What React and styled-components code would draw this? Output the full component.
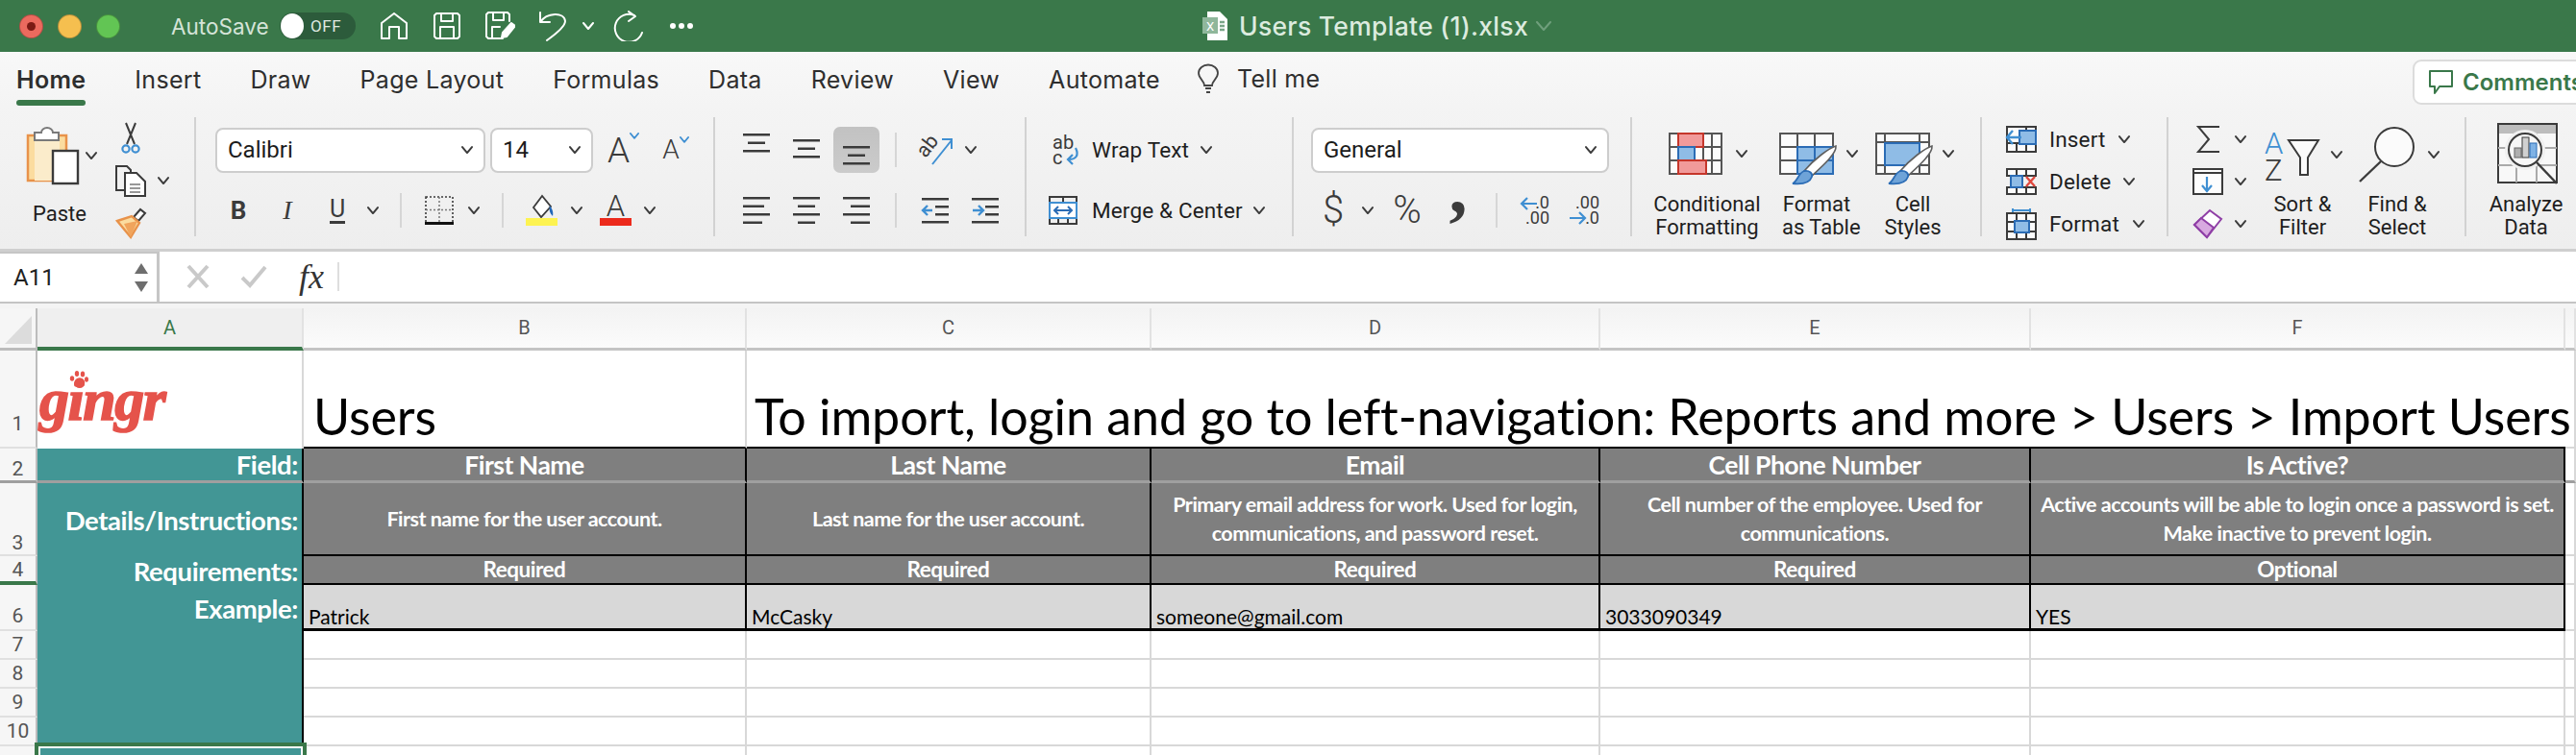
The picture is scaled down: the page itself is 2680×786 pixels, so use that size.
import React from 'react'
import styled, { createGlobalStyle, css } from 'styled-components'

const INK = '#3b3b3b'
const BLUE = '#3f8fd2'
const DEEP = '#2b6cb5'
const GREEN = '#3a784a'
const UI = `Roboto, "Liberation Sans", sans-serif`
const WIDE = `Inter, Roboto, sans-serif`
const CELL = `Lato, "Liberation Sans", sans-serif`

const Global = createGlobalStyle`
    html, body { margin: 0; padding: 0; background: #fff; }
    #root { width: 2680px; height: 786px; overflow: hidden; }
    * { box-sizing: border-box; }
`

const Page = styled.div`
    width: 2680px;
    height: 786px;
    overflow: hidden;
    display: flex;
    flex-direction: column;
    font-family: ${UI};
    color: #222;
`

/* ---------- title bar ---------- */

const TitleBar = styled.header`
    height: 54px;
    flex: none;
    background: ${GREEN};
    display: flex;
    align-items: center;
    padding-left: 20px;
`

const Light = styled.span`
    width: 25px;
    height: 25px;
    margin-right: 15px;
    border-radius: 50%;
    background: ${p => p.$color};
    border: 1px solid rgba(0, 0, 0, 0.25);
    display: flex;
    align-items: center;
    justify-content: center;
    &::after {
        content: '';
        display: ${p => (p.$dot ? 'block' : 'none')};
        width: 9px;
        height: 9px;
        border-radius: 50%;
        background: #7c1a14;
    }
`

const AutoSave = styled.span`
    margin-left: 38px;
    width: 113px;
    font-family: ${WIDE};
    font-size: 22.5px;
    color: #d5e4d8;
`

const Toggle = styled.span`
    width: 79px;
    height: 28px;
    border-radius: 14px;
    background: #2c5b3b;
    display: flex;
    align-items: center;
    padding-left: 1px;
    color: #dfe9e1;
    font-size: 17px;
    letter-spacing: 0.6px;
    &::before {
        content: '';
        width: 24px;
        height: 26px;
        border-radius: 50%;
        background: #fff;
        margin-right: 7px;
    }
`

const QuickIcon = styled.svg`
    flex: none;
    margin-left: ${p => p.$ml}px;
    fill: none;
    stroke: #fff;
    stroke-width: 2;
    stroke-linejoin: round;
    stroke-linecap: round;
`

const DocSlot = styled.span`
    margin-left: 530px;
    display: flex;
`

const DocTitle = styled.span`
    margin-left: 12px;
    font-family: ${WIDE};
    font-size: 26.5px;
    letter-spacing: 0.3px;
    font-weight: 500;
    color: #dcebdf;
    white-space: nowrap;
`

/* ---------- tabs ---------- */

const TabRow = styled.nav`
    height: 56px;
    flex: none;
    background: linear-gradient(#f8f8f8, #f4f4f4);
    display: flex;
    padding-left: 17px;
    gap: 51px;
`

const Tab = styled.span`
    height: 56px;
    display: flex;
    flex-direction: column;
    font-family: ${WIDE};
    font-size: 25px;
    letter-spacing: 0.3px;
    color: #2e2e2e;
    line-height: 58px;
    white-space: nowrap;
    ${p => p.$active && css`
        font-weight: 600;
        &::after {
            content: '';
            display: block;
            height: 6px;
            margin-top: -8px;
            border-radius: 3px;
            background: ${GREEN};
        }
    `}
`

const TellMe = styled.span`
    margin-left: -12px;
    display: flex;
    align-items: center;
    gap: 19px;
    font-family: ${WIDE};
    font-size: 25px;
    letter-spacing: 0.3px;
    color: #2e2e2e;
`

const CommentsButton = styled.button`
    margin: 8px -40px 0 auto;
    width: 210px;
    height: 47px;
    flex: none;
    background: #fff;
    border: 2px solid #dcdcdc;
    border-radius: 9px;
    display: flex;
    align-items: center;
    gap: 10px;
    padding: 0 0 0 15px;
    color: ${GREEN};
    font-family: ${WIDE};
    font-size: 24px;
    font-weight: 600;
`

/* ---------- ribbon ---------- */

const Ribbon = styled.section`
    height: 152px;
    flex: none;
    display: flex;
    padding-top: 12px;
    background: linear-gradient(#f4f4f4, #eeeeee);
    border-bottom: 3px solid #cfcfcf;
`

const Group = styled.div`
    width: ${p => p.$w}px;
    height: 124px;
    flex: none;
    display: flex;
    border-right: ${p => (p.$last ? 'none' : '2px solid #d2d2d2')};
`

const Stack = styled.div`
    display: flex;
    flex-direction: column;
    width: ${p => (p.$w ? `${p.$w}px` : 'auto')};
    flex: none;
    padding-left: ${p => p.$pl || 0}px;
    padding-top: ${p => p.$pt || 0}px;
`

const Row = styled.div`
    display: flex;
    align-items: ${p => p.$align || 'center'};
    height: ${p => p.$h || 44}px;
    margin-top: ${p => p.$mt || 0}px;
    margin-left: ${p => p.$ml || 0}px;
    flex: none;
`

const Slot = styled.span`
    width: ${p => p.$w}px;
    margin-left: ${p => p.$ml || 0}px;
    height: ${p => (p.$h ? `${p.$h}px` : 'auto')};
    flex: none;
    display: flex;
    align-items: center;
    justify-content: center;
`

const ActiveSlot = styled(Slot)`
    height: 48px;
    background: linear-gradient(#c2c2c2, #cbcbcb);
    border-radius: 7px;
    align-items: flex-end;
    padding-bottom: 8px;
`

const AlignTop = styled.span`
    display: flex;
    margin-top: ${p => p.$mt}px;
`

const Sep = styled.span`
    width: 2px;
    height: 36px;
    background: #d6d6d6;
`

const Select = styled.div`
    width: ${p => p.$w}px;
    height: 47px;
    margin-left: ${p => p.$ml || 0}px;
    flex: none;
    background: #fff;
    border: 2px solid #cdcdcd;
    border-radius: 8px;
    display: flex;
    align-items: center;
    justify-content: space-between;
    padding: 0 11px 0 11px;
    font-size: 24px;
    color: #1c1c1c;
`

const CapA = styled.span`
    font-size: ${p => p.$size}px;
    font-weight: 300;
    color: ${INK};
    line-height: 1;
    margin-left: ${p => p.$ml}px;
    display: flex;
    align-items: flex-start;
`

const Letter = styled.span`
    font-family: ${p => (p.$serif ? '"Liberation Serif", serif' : UI)};
    font-size: ${p => p.$size || 27}px;
    font-weight: ${p => p.$weight || 400};
    font-style: ${p => (p.$italic ? 'italic' : 'normal')};
    color: ${INK};
    line-height: 1;
    border-bottom: ${p => (p.$under ? `3px solid ${INK}` : 'none')};
`

const CommaMark = styled.span`
    font-family: "Liberation Serif", serif;
    font-weight: 700;
    font-size: 76px;
    line-height: 34px;
    height: 34px;
    color: ${INK};
    transform: translateY(-24px);
`

const Label = styled.span`
    font-size: 22.5px;
    line-height: 24px;
    letter-spacing: 0.15px;
    color: #1e1e1e;
    white-space: nowrap;
    margin-left: ${p => p.$ml || 0}px;
`

const BigLabel = styled.span`
    width: ${p => p.$w}px;
    flex: none;
    text-align: center;
    font-size: 22px;
    line-height: 24px;
    color: #1e1e1e;
    white-space: nowrap;
`

const Ico = styled.svg`
    flex: none;
    display: block;
    overflow: visible;
    margin-left: ${p => p.$ml || 0}px;
`

const IconText = styled.text`
    font-family: ${UI};
    fill: ${p => p.$fill || INK};
`

const Chev = ({ ml = 0, color = INK, size = 12 }) => (
    <Ico $ml={ml} width={size} height={size * 0.67} viewBox="0 0 12 8">
        <path d="M1 1l5 6 5-6" fill="none" stroke={color} strokeWidth="2" strokeLinecap="round" strokeLinejoin="round" />
    </Ico>
)

const Lines = ({ rows, w = 28, step = 8.5 }) => (
    <Ico width={w} height={(rows.length - 1) * step + 3}>
        {rows.map((r, i) => (
            <rect key={i} x={r[0]} y={i * step} width={r[1]} height="2.5" fill={INK} />
        ))}
    </Ico>
)

const Indent = ({ flip }) => (
    <Ico width="28" height="26" viewBox="0 0 28 26">
        <rect x="0" y="0" width="28" height="2.5" fill={INK} />
        <rect x="14" y="8" width="14" height="2.5" fill={INK} />
        <rect x="14" y="16" width="14" height="2.5" fill={INK} />
        <rect x="0" y="24" width="28" height="2.5" fill={INK} />
        <path d={flip ? 'M1 13h10M7 8l5 5-5 5' : 'M11 13H1M6 8l-5 5 5 5'} fill="none" stroke={BLUE} strokeWidth="2.4" />
    </Ico>
)

const Paste = () => (
    <Ico width="54" height="60" viewBox="0 0 54 60">
        <rect x="1" y="9" width="40" height="47" fill="#fbdc9f" stroke="#e8924a" strokeWidth="2.5" />
        <rect x="8" y="11" width="26" height="45" fill="#fbeccb" />
        <path d="M8 14V6h7a6 5 0 0 1 12 0h6v8z" fill="#fff" stroke="#7a7a7a" strokeWidth="2" />
        <rect x="27" y="25" width="26" height="34" fill="#fff" stroke={INK} strokeWidth="2.4" />
    </Ico>
)

const Scissors = () => (
    <Ico width="20" height="32" viewBox="0 0 20 32">
        <path d="M5 0l9 22M15 0L6 22" fill="none" stroke={INK} strokeWidth="2" />
        <circle cx="5" cy="27" r="3.6" fill="none" stroke={BLUE} strokeWidth="2.2" />
        <circle cx="15" cy="27" r="3.6" fill="none" stroke={BLUE} strokeWidth="2.2" />
    </Ico>
)

const Copy = () => (
    <Ico width="32" height="32" viewBox="0 0 32 32">
        <path d="M10 26H1V1h11l4 4v3" fill="none" stroke={INK} strokeWidth="2" />
        <path d="M10 8h12l9 9v15H10z" fill="#fff" stroke={INK} strokeWidth="2" />
        <path d="M15 20h11M15 24h11M15 28h11" stroke="#777" strokeWidth="1.6" />
    </Ico>
)

const Painter = () => (
    <Ico width="32" height="30" viewBox="0 0 32 30">
        <path d="M19 9l7-8 5 4-7 8z" fill="#fff" stroke={INK} strokeWidth="2" />
        <path d="M2 13l15-5 8 7-9 15z" fill="#fbdc9f" stroke="#e8924a" strokeWidth="2.4" />
        <path d="M16 30L9 16l14-3z" fill="#f0a45c" />
    </Ico>
)

const Borders = () => (
    <Ico width="30" height="30" viewBox="0 0 30 30">
        <rect x="1" y="1" width="28" height="27" fill="none" stroke={INK} strokeWidth="1.6" strokeDasharray="2 2" />
        <path d="M15 1v27M1 14.500h28" stroke="#777" strokeWidth="1.5" strokeDasharray="2 2" />
        <rect x="0" y="27" width="30" height="3" fill="#111" />
    </Ico>
)

const FillColor = () => (
    <Ico width="33" height="32" viewBox="0 0 33 32">
        <path d="M17 1l-9 12 8 10 10-11z" fill="#fff" stroke={INK} strokeWidth="1.8" />
        <path d="M25 11c2 3 4 6 3 11-3-3-4-6-3-11z" fill="#1f66b8" />
        <rect x="0" y="24" width="33" height="8" fill="#fdf351" />
    </Ico>
)

const FontColor = () => (
    <Ico width="33" height="32" viewBox="0 0 33 32">
        <IconText x="16.500" y="22" fontSize="31" fontWeight="300" textAnchor="middle">A</IconText>
        <rect x="0" y="24" width="33" height="8" fill="#ec2a1c" />
    </Ico>
)

const Orientation = () => (
    <Ico width="34" height="30" viewBox="0 0 34 30">
        <IconText transform="translate(10 18) rotate(-52)" fontSize="21" x="-8" y="0">ab</IconText>
        <path d="M12 30L32 5M22 4h10v10" fill="none" stroke={BLUE} strokeWidth="2" />
    </Ico>
)

const WrapIcon = () => (
    <Ico width="28" height="30" viewBox="0 0 28 30">
        <IconText x="0" y="14" fontSize="20">ab</IconText>
        <IconText x="0" y="30" fontSize="20">c</IconText>
        <path d="M24 13c4 8 0 12-7 12M21 20l-5 5 5 5" fill="none" stroke={BLUE} strokeWidth="2.2" />
    </Ico>
)

const MergeIcon = () => (
    <Ico width="30" height="30" viewBox="0 0 30 30">
        <path d="M1 1h28v28H1zM1 7h28M1 23h28M15 1v6M10 23v6M20 23v6" fill="none" stroke={INK} strokeWidth="2" />
        <rect x="1" y="7" width="28" height="16" fill="#fff" stroke={BLUE} strokeWidth="2" />
        <path d="M6 15h18M10 11l-4 4 4 4M20 11l4 4-4 4" fill="none" stroke={DEEP} strokeWidth="2" />
    </Ico>
)

const DecimalIcon = ({ more }) => (
    <Ico width="32" height="32" viewBox="0 0 32 32">
        {more ? (
            <>
                <IconText x="31" y="14" fontSize="18" textAnchor="end">.00</IconText>
                <IconText x="31" y="30" fontSize="18" textAnchor="end">.0</IconText>
                <path d="M0 24h16M10 18l6 6-6 6" fill="none" stroke={BLUE} strokeWidth="2.2" />
            </>
        ) : (
            <>
                <IconText x="31" y="14" fontSize="18" textAnchor="end">.0</IconText>
                <IconText x="31" y="30" fontSize="18" textAnchor="end">.00</IconText>
                <path d="M18 9H2M8 3L2 9l6 6" fill="none" stroke={BLUE} strokeWidth="2.2" />
            </>
        )}
    </Ico>
)

const Brush = () => (
    <g>
        <path d="M59 14c1 8-15 22-26 32l-7-6c10-12 26-24 33-26z" fill="#fff" stroke="#5f5f5f" strokeWidth="1.6" />
        <path d="M26 40c6-1 9 3 8 6-2 6-10 8-20 7 5-2 6-11 12-13z" fill="#6ea3d8" stroke={DEEP} strokeWidth="1.8" />
    </g>
)

const CondFormat = () => (
    <Ico width="56" height="44" viewBox="0 0 56 44">
        <path d="M1 1h54v42H1zM10 1v42M36 1v42M45 1v42M1 15h54M1 29h54" fill="#fbfbfb" stroke="#555" strokeWidth="2" />
        <rect x="10" y="1" width="26" height="14" fill="#f19a9a" stroke="#c5362b" strokeWidth="2" />
        <rect x="10" y="15" width="17" height="14" fill="#8fbce6" stroke={DEEP} strokeWidth="2" />
        <rect x="10" y="29" width="29" height="14" fill="#f19a9a" stroke="#c5362b" strokeWidth="2" />
    </Ico>
)

const TableStyle = () => (
    <Ico width="60" height="53" viewBox="0 0 60 53">
        <path d="M1 1h55v42H1zM19 1v42M37 1v42M1 15h55M1 29h55" fill="#fbfbfb" stroke="#555" strokeWidth="2" />
        <rect x="19" y="15" width="37" height="28" fill="#8fbce6" stroke={DEEP} strokeWidth="2" />
        <path d="M37 15v28M19 29h37" stroke={DEEP} strokeWidth="2" />
        <Brush />
    </Ico>
)

const CellStyle = () => (
    <Ico width="60" height="53" viewBox="0 0 60 53">
        <path d="M1 1h55v42H1zM10 1v42M46 1v42M1 10h55M1 34h55" fill="#fbfbfb" stroke="#555" strokeWidth="2" />
        <rect x="10" y="11" width="36" height="23" fill="#8fbce6" stroke={DEEP} strokeWidth="2" />
        <Brush />
    </Ico>
)

const InsertIcon = () => (
    <Ico width="32" height="28" viewBox="0 0 32 28">
        <path d="M1 1h30v26H1zM1 18h30M21 18v9M11 18v9M21 1v17" fill="#fbfbfb" stroke={INK} strokeWidth="2" />
        <rect x="14" y="5" width="17" height="14" fill="#8fbce6" stroke={DEEP} strokeWidth="2" />
        <path d="M16 12H1M7 5l-6 7 6 7" fill="none" stroke={BLUE} strokeWidth="2.4" />
    </Ico>
)

const DeleteIcon = () => (
    <Ico width="32" height="28" viewBox="0 0 32 28">
        <path d="M1 1h30v7H1zM1 20h30v7H1zM11 1v7M21 1v7M11 20v7M21 20v7" fill="#fbfbfb" stroke={INK} strokeWidth="2" />
        <rect x="5" y="8" width="12" height="12" fill="#8fbce6" stroke={DEEP} strokeWidth="2" />
        <path d="M21 9l9 10M30 9l-9 10" stroke="#e0483e" strokeWidth="2.4" />
    </Ico>
)

const FormatIcon = () => (
    <Ico width="32" height="33" viewBox="0 0 32 33">
        <path d="M1 5h30v27H1zM11 5v27M21 5v27M1 14h30M1 24h30" fill="#fbfbfb" stroke={INK} strokeWidth="2" />
        <rect x="9" y="13" width="15" height="12" fill="#8fbce6" stroke={DEEP} strokeWidth="2" />
        <path d="M7 2h18M7 0v4M25 0v4" stroke={BLUE} strokeWidth="2" />
    </Ico>
)

const Sigma = () => (
    <Ico width="24" height="28" viewBox="0 0 24 28">
        <path d="M24 1H2l11 13L2 27h22" fill="none" stroke={INK} strokeWidth="2" />
    </Ico>
)

const FillDown = () => (
    <Ico width="32" height="28" viewBox="0 0 32 28">
        <rect x="1" y="1" width="30" height="26" fill="#fdfdfd" stroke={INK} strokeWidth="2" />
        <path d="M1 5h30" stroke={INK} strokeWidth="2" />
        <path d="M15 9v14M10 18l5 6 5-6" fill="none" stroke={BLUE} strokeWidth="2.2" />
    </Ico>
)

const Eraser = () => (
    <Ico width="30" height="30" viewBox="0 0 30 30">
        <path d="M1 16L17 1l12 9-15 19z" fill="#fff" stroke="#8f3fa6" strokeWidth="2" />
        <path d="M1 16l7-7 13 10-7 10z" fill="#d8a9e0" stroke="#8f3fa6" strokeWidth="2" />
    </Ico>
)

const SortIcon = () => (
    <Ico width="56" height="54" viewBox="0 0 56 54">
        <IconText x="0" y="26" fontSize="31" fontWeight="300" $fill={BLUE}>A</IconText>
        <IconText x="0" y="54" fontSize="31" fontWeight="300">Z</IconText>
        <path d="M25 12h31L45 30v18h-8V30z" fill="#fbfbfb" stroke={INK} strokeWidth="2" />
    </Ico>
)

const FindIcon = () => (
    <Ico width="58" height="58" viewBox="0 0 58 58">
        <circle cx="37" cy="21" r="20" fill="#fbfbfb" stroke={INK} strokeWidth="2" />
        <path d="M23 36L1 57" stroke={INK} strokeWidth="2.4" />
    </Ico>
)

const Analyze = () => (
    <Ico width="64" height="64" viewBox="0 0 64 64">
        <rect x="1" y="1" width="61" height="61" fill="#f8f8f8" stroke={INK} strokeWidth="2" />
        <rect x="2" y="2" width="59" height="9" fill="#bdbdbd" />
        <path d="M1 26h61M1 44h61M20 11v51M41 11v51" stroke="#aaa" strokeWidth="2" />
        <circle cx="29" cy="28" r="19" fill="#fff" stroke="#f0f0f0" strokeWidth="4" />
        <circle cx="29" cy="28" r="17" fill="#f7f7f7" stroke={INK} strokeWidth="2" />
        <rect x="18" y="26" width="7" height="10" fill="#b0b0b0" stroke="#666" />
        <rect x="26" y="15" width="7" height="21" fill="#d0d0d0" stroke={INK} />
        <rect x="34" y="21" width="7" height="15" fill="#7fb2e5" stroke={DEEP} />
        <path d="M41 41l21 22" stroke={INK} strokeWidth="2.5" />
    </Ico>
)

const Bulb = () => (
    <Ico width="22" height="31" viewBox="0 0 22 31">
        <path d="M7 22c0-5-6-7-6-13a10 8.500 0 0 1 20 0c0 6-6 8-6 13z" fill="none" stroke="#444" strokeWidth="1.8" />
        <path d="M8 25h6M9 29h4" stroke="#444" strokeWidth="2" />
    </Ico>
)

const CommentIcon = () => (
    <Ico width="25" height="25" viewBox="0 0 25 25">
        <path d="M1 1h23v16H11l-5 7v-7H1z" fill="none" stroke={GREEN} strokeWidth="2" strokeLinejoin="round" />
    </Ico>
)

const DocIcon = () => (
    <Ico $ml={0} width="26" height="30" viewBox="0 0 26 30">
        <path d="M5 0h13l8 8v22H5z" fill="#fff" />
        <rect x="0" y="6" width="16" height="17" fill="#8fb79b" />
        <IconText x="8" y="20" fontSize="13" textAnchor="middle" $fill="#fff">X</IconText>
        <path d="M18 11h5M18 15h5M18 19h5" stroke="#7aa688" strokeWidth="2.5" />
    </Ico>
)

/* ---------- formula bar ---------- */

const FormulaBar = styled.div`
    height: 59px;
    flex: none;
    display: flex;
    border-bottom: 5px solid #f4f4f4;
    background: #fff;
    box-shadow: 0 2px 0 #bdbdbd, inset 0 -2px 0 #c4c4c4;
`

const NameBox = styled.div`
    width: 166px;
    height: 52px;
    flex: none;
    background: #fff;
    border-right: 3px solid #c6c6c6;
    border-top: 2px solid #c6c6c6;
    display: flex;
    align-items: center;
    justify-content: space-between;
    padding: 0 9px 0 14px;
    font-size: 24px;
    color: #222;
`

const Spinner = styled.span`
    display: flex;
    flex-direction: column;
    gap: 8px;
`

const Tri = styled.span`
    width: 14px;
    height: 11px;
    background: #6e6e6e;
    clip-path: ${p => (p.$down ? 'polygon(0 0, 100% 0, 50% 100%)' : 'polygon(50% 0, 100% 100%, 0 100%)')};
`

const FormulaTools = styled.div`
    flex: 1;
    display: flex;
    align-items: center;
    padding-left: 28px;
    height: 52px;
`

const FxMark = styled.span`
    font-family: "Liberation Serif", serif;
    font-style: italic;
    font-size: 36px;
    line-height: 1;
    margin-left: 33px;
    color: #333;
`

const FxRule = styled.span`
    width: 2px;
    height: 30px;
    margin-left: 14px;
    background: #dedede;
`

/* ---------- sheet ---------- */

const Sheet = styled.div`
    flex: 1;
    display: grid;
    grid-template-columns: 39px 277px 461px 421px 467px 448px 556px 11px;
    grid-template-rows: 44px 102px 36px 76px 30px 48px 30px 30px 30px 30px 36px;
    overflow: hidden;
    font-family: ${CELL};
    color: #000;
`

const Corner = styled.div`
    background: #f6f6f6;
    border-right: 2px solid #bcbcbc;
    border-bottom: 3px solid #bcbcbc;
    padding: 8px 4px 4px 5px;
    &::before {
        content: '';
        display: block;
        width: 100%;
        height: 100%;
        background: #dcdcdc;
        clip-path: polygon(100% 0, 100% 100%, 0 100%);
    }
`

const ColHead = styled.div`
    display: flex;
    align-items: center;
    justify-content: center;
    font-family: ${UI};
    font-size: 20px;
    color: ${p => (p.$active ? GREEN : '#555')};
    background: ${p => (p.$active ? '#efefef' : 'linear-gradient(#f3f3f3, #fbfbfb)')};
    border-right: 2px solid #e2e2e2;
    border-bottom: ${p => (p.$active ? `4px solid ${GREEN}` : '3px solid #c4c4c4')};
    padding-bottom: ${p => (p.$active ? '1px' : '2px')};
`

const RowHead = styled.div`
    display: flex;
    align-items: flex-end;
    justify-content: center;
    font-family: ${UI};
    font-size: 21px;
    line-height: 22px;
    color: #555;
    background: #f6f6f6;
    border-right: 2px solid #bcbcbc;
    border-bottom: ${p => p.$line || '2px solid #e0e0e0'};
    padding-bottom: ${p => p.$pb}px;
`

const Blank = styled.div`
    background: #fff;
    border-right: 2px solid #d8d8d8;
    border-bottom: ${p => p.$line || '2px solid #d8d8d8'};
`

const TitleCell = styled.div`
    grid-column: ${p => p.$span};
    z-index: 1;
    display: flex;
    align-items: flex-end;
    padding-left: ${p => p.$pl}px;
    padding-bottom: 4px;
    font-size: 52px;
    line-height: 56px;
    letter-spacing: -0.06px;
    white-space: nowrap;
    background: #fff;
    border-bottom: 2px solid #000;
    border-right: ${p => (p.$rule ? '2px solid #d8d8d8' : 'none')};
`

const LogoCell = styled.div`
    background: #fff;
    border-right: 2px solid #d8d8d8;
    position: relative;
    overflow: hidden;
`

const LogoWord = styled.span`
    position: absolute;
    left: 2px;
    top: 16px;
    font-family: "Liberation Serif", serif;
    font-style: italic;
    font-weight: 700;
    font-size: 62px;
    line-height: 70px;
    letter-spacing: -1.500px;
    -webkit-text-stroke: 1.600px #e5534b;
    color: #e5534b;
`

const Paw = styled.svg`
    position: absolute;
    left: 33px;
    top: 21px;
`

const Teal = styled.div`
    background: #429695;
    color: #fff;
    font-weight: 700;
    font-size: 27.5px;
    letter-spacing: -0.4px;
    text-align: right;
    display: flex;
    align-items: center;
    justify-content: flex-end;
    padding-right: 4px;
    border-right: 2px solid #000;
    border-bottom: ${p => p.$line || 'none'};
`

const Selected = styled.div`
    background: #429695;
    border: 4px solid ${GREEN};
    outline: 2px solid #fff;
    outline-offset: -6px;
    margin: -4px -3px 0 -3px;
    z-index: 2;
`

const Head = styled.div`
    background: #7f7f7f;
    color: #fff;
    font-weight: 700;
    display: flex;
    align-items: center;
    justify-content: center;
    text-align: center;
    white-space: pre-line;
    font-size: ${p => p.$size}px;
    line-height: 30px;
    letter-spacing: -0.5px;
    border-right: 2px solid #000;
    border-bottom: ${p => p.$line || '2px solid #000'};
    z-index: 1;
`

const Example = styled.div`
    background: #d8d8d8;
    display: flex;
    align-items: flex-end;
    padding-left: 5px;
    font-size: 21px;
    line-height: 24px;
    border-right: 2px solid #000;
    border-bottom: 3px solid #000;
    z-index: 1;
`

const FREEZE = '3px solid #9f9f9f'

const columns = [
    {
        letter: 'B',
        field: 'First Name',
        details: 'First name for the user account.',
        req: 'Required',
        example: 'Patrick',
    },
    {
        letter: 'C',
        field: 'Last Name',
        details: 'Last name for the user account.',
        req: 'Required',
        example: 'McCasky',
    },
    {
        letter: 'D',
        field: 'Email',
        details: 'Primary email address for work. Used for login,\ncommunications, and password reset.',
        req: 'Required',
        example: 'someone@gmail.com',
    },
    {
        letter: 'E',
        field: 'Cell Phone Number',
        details: 'Cell number of the employee. Used for\ncommunications.',
        req: 'Required',
        example: '3033090349',
    },
    {
        letter: 'F',
        field: 'Is Active?',
        details: 'Active accounts will be able to login once a password is set.\nMake inactive to prevent login.',
        req: 'Optional',
        example: 'YES',
    },
]

const EmptyRows = () => (
    <>
        {[7, 8, 9, 10, 11].map(n => (
            <React.Fragment key={n}>
                <RowHead $pb={3}>{n}</RowHead>
                {n === 11 ? <Selected /> : <Teal />}
                {columns.map(c => <Blank key={c.letter} />)}
                <Blank />
            </React.Fragment>
        ))}
    </>
)

const SheetArea = () => (
    <Sheet>
        <Corner />
        <ColHead $active>A</ColHead>
        {columns.map(c => <ColHead key={c.letter}>{c.letter}</ColHead>)}
        <ColHead />

        <RowHead $pb={13}>1</RowHead>
        <LogoCell>
            <LogoWord>gingr</LogoWord>
            <Paw width="20" height="20" viewBox="0 0 20 20">
                <g fill="#e5534b">
                    <ellipse cx="3" cy="8" rx="2.200" ry="2.800" />
                    <ellipse cx="8" cy="3" rx="2.200" ry="3" />
                    <ellipse cx="14" cy="3.500" rx="2.200" ry="3" />
                    <ellipse cx="18" cy="9" rx="2" ry="2.800" />
                    <path d="M5 14c0-4 4-6 6-6s5 2 5 6c0 3-3 2-5 2-3 0-6 2-6-2z" />
                </g>
            </Paw>
        </LogoCell>
        <TitleCell $span="span 1" $pl={10} $rule>Users</TitleCell>
        <TitleCell $span="span 4" $pl={8}>To import, login and go to left-navigation: Reports and more &gt; Users &gt; Import Users</TitleCell>
        <Blank />

        <RowHead $pb={1} $line={FREEZE}>2</RowHead>
        <Teal $line={FREEZE}>Field:</Teal>
        {columns.map(c => <Head key={c.letter} $size={26.500} $line={FREEZE}>{c.field}</Head>)}
        <Blank $line={FREEZE} />

        <RowHead $pb={1}>3</RowHead>
        <Teal>Details/Instructions:</Teal>
        {columns.map(c => <Head key={c.letter} $size={21.500}>{c.details}</Head>)}
        <Blank />

        <RowHead $pb={1} $line={`4px solid ${GREEN}`}>4</RowHead>
        <Teal>Requirements:</Teal>
        {columns.map(c => <Head key={c.letter} $size={22.500}>{c.req}</Head>)}
        <Blank />

        <RowHead $pb={3}>6</RowHead>
        <Teal>Example:</Teal>
        {columns.map(c => <Example key={c.letter}>{c.example}</Example>)}
        <Blank />

        <EmptyRows />
    </Sheet>
)

const TOP3 = [[0, 28], [5, 18], [0, 28]]
const BODY = {
    left: [[0, 28], [0, 22], [0, 28], [0, 20]],
    center: [[0, 28], [5, 18], [0, 28], [5, 18]],
    right: [[0, 28], [8, 20], [0, 28], [8, 20]],
}

const RibbonArea = () => (
    <Ribbon>
        <Group $w={204}>
            <Stack $w={115}>
                <Row $h={60} $mt={10} $ml={28}>
                    <Paste />
                    <Slot $w={26}><Chev /></Slot>
                </Row>
                <Row $h={24} $mt={19}>
                    <BigLabel $w={124}>Paste</BigLabel>
                </Row>
            </Stack>
            <Stack>
                <Row><Slot $w={36} $ml={3}><Scissors /></Slot></Row>
                <Row><Slot $w={36} $ml={3}><Copy /></Slot><Slot $w={20} $ml={6}><Chev /></Slot></Row>
                <Row><Slot $w={36} $ml={3}><Painter /></Slot></Row>
            </Stack>
        </Group>

        <Group $w={540}>
            <Stack $pl={20} $pt={10}>
                <Row $h={48}>
                    <Select $w={281}>Calibri<Chev /></Select>
                    <Select $w={107} $ml={5}>14<Chev /></Select>
                    <CapA $size={37} $ml={15}>A<Chev color={BLUE} size={10} /></CapA>
                    <CapA $size={28} $ml={24}>A<Chev color={BLUE} size={10} /></CapA>
                </Row>
                <Row $mt={17}>
                    <Slot $w={48}><Letter $size={26} $weight={700}>B</Letter></Slot>
                    <Slot $w={54}><Letter $italic $serif $size={28}>I</Letter></Slot>
                    <Slot $w={50}><Letter $size={25} $under>U</Letter></Slot>
                    <Slot $w={24}><Chev /></Slot>
                    <Slot $w={34}><Sep /></Slot>
                    <Slot $w={46}><Borders /></Slot>
                    <Slot $w={26}><Chev /></Slot>
                    <Slot $w={34}><Sep /></Slot>
                    <Slot $w={46}><FillColor /></Slot>
                    <Slot $w={28}><Chev /></Slot>
                    <Slot $w={52}><FontColor /></Slot>
                    <Slot $w={20}><Chev /></Slot>
                </Row>
            </Stack>
        </Group>

        <Group $w={324}>
            <Stack $pl={17} $pt={10}>
                <Row $h={48}>
                    <Slot $w={52}><AlignTop $mt={-14}><Lines rows={TOP3} /></AlignTop></Slot>
                    <Slot $w={52}><AlignTop $mt={-3}><Lines rows={TOP3} /></AlignTop></Slot>
                    <ActiveSlot $w={48} $ml={2}><Lines rows={TOP3} /></ActiveSlot>
                    <Slot $w={32} $ml={1}><Sep /></Slot>
                    <Slot $w={54}><Orientation /></Slot>
                    <Slot $w={16}><Chev /></Slot>
                </Row>
                <Row $mt={17}>
                    <Slot $w={52}><Lines rows={BODY.left} /></Slot>
                    <Slot $w={52}><Lines rows={BODY.center} /></Slot>
                    <Slot $w={52}><Lines rows={BODY.right} /></Slot>
                    <Slot $w={30}><Sep /></Slot>
                    <Slot $w={52}><Indent /></Slot>
                    <Slot $w={52}><Indent flip /></Slot>
                </Row>
            </Stack>
        </Group>

        <Group $w={278}>
            <Stack $pl={21} $pt={10}>
                <Row $h={48}>
                    <Slot $w={40}><WrapIcon /></Slot>
                    <Label $ml={7}>Wrap Text</Label>
                    <Chev ml={12} />
                </Row>
                <Row $mt={17}>
                    <Slot $w={34}><MergeIcon /></Slot>
                    <Label $ml={13}>Merge &amp; Center</Label>
                    <Chev ml={11} />
                </Row>
            </Stack>
        </Group>

        <Group $w={352}>
            <Stack $pl={18} $pt={10}>
                <Row $h={48}>
                    <Select $w={310}>General<Chev /></Select>
                </Row>
                <Row $mt={17}>
                    <Slot $w={46}><Letter $size={40} $weight={300}>$</Letter></Slot>
                    <Slot $w={26}><Chev /></Slot>
                    <Slot $w={56}><Letter $size={40} $weight={300}>%</Letter></Slot>
                    <Slot $w={50} $h={34}><CommaMark>,</CommaMark></Slot>
                    <Slot $w={30}><Sep /></Slot>
                    <Slot $w={50}><DecimalIcon /></Slot>
                    <Slot $w={54}><DecimalIcon more /></Slot>
                </Row>
            </Stack>
        </Group>

        <Group $w={364}>
            <Stack>
                <Row $h={53} $mt={16} $ml={38} $align="flex-start">
                    <CondFormat />
                    <Slot $w={40} $h={44}><Chev /></Slot>
                    <Slot $w={60} $ml={19}><TableStyle /></Slot>
                    <Slot $w={24} $h={44} $ml={4}><Chev /></Slot>
                    <Slot $w={60} $ml={12}><CellStyle /></Slot>
                    <Slot $w={24} $h={44} $ml={4}><Chev /></Slot>
                </Row>
                <Row $h={48} $mt={10}>
                    <BigLabel $w={156}>Conditional<br />Formatting</BigLabel>
                    <BigLabel $w={72}>Format<br />as Table</BigLabel>
                    <BigLabel $w={128}>Cell<br />Styles</BigLabel>
                </Row>
            </Stack>
        </Group>

        <Group $w={194}>
            <Stack $pl={21} $pt={1}>
                <Row>
                    <Slot $w={40}><InsertIcon /></Slot>
                    <Label $ml={9}>Insert</Label>
                    <Chev ml={13} />
                </Row>
                <Row>
                    <Slot $w={40}><DeleteIcon /></Slot>
                    <Label $ml={9}>Delete</Label>
                    <Chev ml={13} />
                </Row>
                <Row>
                    <Slot $w={40}><FormatIcon /></Slot>
                    <Label $ml={9}>Format</Label>
                    <Chev ml={14} />
                </Row>
            </Stack>
        </Group>

        <Group $w={310}>
            <Stack $w={89} $pl={21} $pt={1}>
                <Row>
                    <Slot $w={40}><Sigma /></Slot>
                    <Slot $w={20} $ml={4}><Chev /></Slot>
                </Row>
                <Row>
                    <Slot $w={40}><FillDown /></Slot>
                    <Slot $w={20} $ml={4}><Chev /></Slot>
                </Row>
                <Row>
                    <Slot $w={40}><Eraser /></Slot>
                    <Slot $w={20} $ml={4}><Chev /></Slot>
                </Row>
            </Stack>
            <Stack>
                <Row $h={58} $mt={10} $ml={11}>
                    <SortIcon />
                    <Slot $w={20} $ml={9}><Chev /></Slot>
                    <Slot $w={58} $ml={13}><FindIcon /></Slot>
                    <Slot $w={20} $ml={10}><Chev /></Slot>
                </Row>
                <Row $h={48} $mt={11}>
                    <BigLabel $w={101}>Sort &amp;<br />Filter</BigLabel>
                    <BigLabel $w={96}>Find &amp;<br />Select</BigLabel>
                </Row>
            </Stack>
        </Group>

        <Group $w={115} $last>
            <Stack>
                <Row $h={64} $mt={6} $ml={32}><Analyze /></Row>
                <Row $h={48} $mt={9}>
                    <BigLabel $w={124}>Analyze<br />Data</BigLabel>
                </Row>
            </Stack>
        </Group>
    </Ribbon>
)

export default function App() {
    return (
        <Page>
            <Global />
            <TitleBar>
                <Light $color="#ec6a5e" $dot />
                <Light $color="#f5bf4f" />
                <Light $color="#62c554" />
                <AutoSave>AutoSave</AutoSave>
                <Toggle>OFF</Toggle>
                <QuickIcon $ml={25} width="30" height="28" viewBox="0 0 30 28">
                    <path d="M2 27V11L15 1l13 10v16h-8V15h-10v12z" />
                </QuickIcon>
                <QuickIcon $ml={26} width="28" height="28" viewBox="0 0 28 28">
                    <path d="M3 1h22l2 2v22l-2 2H3l-2-2V3zM8 1v8h12V1M7 27V15h14v12" />
                </QuickIcon>
                <QuickIcon $ml={26} width="31" height="30" viewBox="0 0 31 30">
                    <path d="M18 28H3l-2-2V3l2-2h20l2 2v7M8 1v8h11V1M7 28V16h8" />
                    <path d="M17 27l1-5 9-10 4 3-9 11z" fill="#fff" />
                </QuickIcon>
                <QuickIcon $ml={25} width="28" height="32" viewBox="0 0 28 32">
                    <path d="M1 2v10h10M1 12C8 2 26 1 27 11c0 6-12 15-19 20" />
                </QuickIcon>
                <QuickIcon $ml={17} width="12" height="8" viewBox="0 0 12 8">
                    <path d="M1 1l5 6 5-6" />
                </QuickIcon>
                <QuickIcon $ml={20} width="32" height="32" viewBox="0 0 32 32">
                    <path d="M22 5A14.500 14.500 0 1 0 30 23M16 1l7 5-7 5" />
                </QuickIcon>
                <QuickIcon $ml={27} width="24" height="6" viewBox="0 0 24 6">
                    <g fill="#fff" stroke="none">
                        <circle cx="3" cy="3" r="3" />
                        <circle cx="12" cy="3" r="3" />
                        <circle cx="21" cy="3" r="3" />
                    </g>
                </QuickIcon>
                <DocSlot><DocIcon /></DocSlot>
                <DocTitle>Users Template (1).xlsx</DocTitle>
                <QuickIcon $ml={8} width="16" height="10" viewBox="0 0 16 10" style={{ stroke: '#6f9f7c' }}>
                    <path d="M1 1l7 8 7-8" />
                </QuickIcon>
            </TitleBar>

            <TabRow>
                <Tab $active>Home</Tab>
                <Tab>Insert</Tab>
                <Tab>Draw</Tab>
                <Tab>Page Layout</Tab>
                <Tab>Formulas</Tab>
                <Tab>Data</Tab>
                <Tab>Review</Tab>
                <Tab>View</Tab>
                <Tab>Automate</Tab>
                <TellMe><Bulb />Tell me</TellMe>
                <CommentsButton><CommentIcon />Comments</CommentsButton>
            </TabRow>

            <RibbonArea />

            <FormulaBar>
                <NameBox>
                    A11
                    <Spinner><Tri /><Tri $down /></Spinner>
                </NameBox>
                <FormulaTools>
                    <Ico width="24" height="24" viewBox="0 0 24 24">
                        <path d="M2 1l20 22M22 1L2 23" stroke="#c9c9c9" strokeWidth="4" />
                    </Ico>
                    <Ico $ml={32} width="28" height="22" viewBox="0 0 28 22">
                        <path d="M2 12l8 8L26 1" fill="none" stroke="#c9c9c9" strokeWidth="4" />
                    </Ico>
                    <FxMark>fx</FxMark>
                    <FxRule />
                </FormulaTools>
            </FormulaBar>

            <SheetArea />
        </Page>
    )
}
